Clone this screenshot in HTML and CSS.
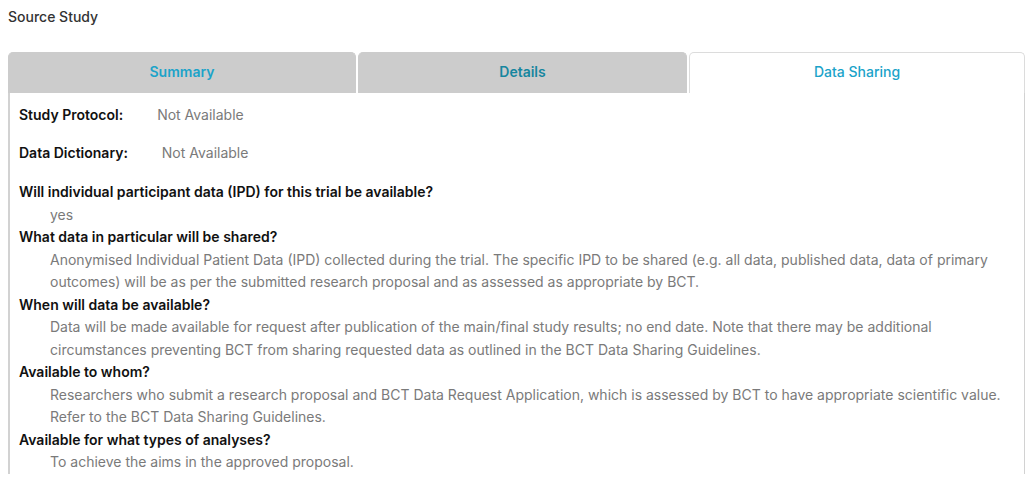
FILE: index.html
```html
<!DOCTYPE html>
<html lang="en">
<head>
    <meta charset="UTF-8">
    <meta name="viewport" content="width=device-width, initial-scale=1.0">
    <title>Source Study - Data Sharing</title>
    <link rel="stylesheet" href="styles.css">
</head>
<body>
    <h4 class="section-title">Source Study</h4>

    <div class="tabs">
        <ul class="tab-list">
            <li class="tab">Summary</li>
            <li class="tab tab-hover">Details</li>
            <li class="tab active">Data Sharing</li>
        </ul>

        <div class="tab-panel">
            <div class="field">
                <span class="field-label">Study Protocol:</span>
                <span class="field-value">Not Available</span>
            </div>
            <div class="field">
                <span class="field-label">Data Dictionary:</span>
                <span class="field-value">Not Available</span>
            </div>

            <dl class="qa">
                <dt>Will individual participant data (IPD) for this trial be available?</dt>
                <dd>yes</dd>
                <dt>What data in particular will be shared?</dt>
                <dd>Anonymised Individual Patient Data (IPD) collected during the trial. The specific IPD to be shared (e.g. all data, published data, data of primary outcomes) will be as per the submitted research proposal and as assessed as appropriate by BCT.</dd>
                <dt>When will data be available?</dt>
                <dd>Data will be made available for request after publication of the main/final study results; no end date. Note that there may be additional circumstances preventing BCT from sharing requested data as outlined in the BCT Data Sharing Guidelines.</dd>
                <dt>Available to whom?</dt>
                <dd>Researchers who submit a research proposal and BCT Data Request Application, which is assessed by BCT to have appropriate scientific value. Refer to the BCT Data Sharing Guidelines.</dd>
                <dt>Available for what types of analyses?</dt>
                <dd>To achieve the aims in the approved proposal.</dd>
            </dl>
        </div>
    </div>
</body>
</html>
```

FILE: styles.css
```css
:root {
    --tab-bg: #cccccc;
    --tab-text: #1ba3c9;
    --tab-text-hover: #16869f;
    --border: #d2d2d2;
    --label: #111111;
    --muted: #7a7a7a;
}

body {
    font-family: Inter, 'Noto Sans', sans-serif;
    font-size: 14px;
    color: #333;
    margin: 0;
    padding: 8px;
    background: white;
}

.section-title {
    font-size: 14px;
    font-weight: 500;
    color: #333;
    margin: 0 0 26px;
    line-height: 18px;
}

.tab-list {
    list-style: none;
    margin: 0;
    padding: 0;
    display: grid;
    grid-template-columns: 348px 329px 336px;
    gap: 2px;
}

.tab {
    height: 41px;
    padding-bottom: 3px;
    display: flex;
    align-items: center;
    justify-content: center;
    background: var(--tab-bg);
    border: 1px solid var(--tab-bg);
    border-bottom: none;
    border-radius: 5px 5px 0 0;
    color: var(--tab-text);
    font-weight: 600;
    box-sizing: border-box;
}

.tab-hover {
    color: var(--tab-text-hover);
}

.tab.active {
    background: white;
    border-color: #dcdcdc;
    font-weight: 500;
}

.tab-panel {
    width: 1017px;
    box-sizing: border-box;
    border-left: 2px solid var(--border);
    border-right: 1px solid var(--border);
    padding: 12px 10px 0 9px;
}

.field {
    line-height: 19px;
    margin-bottom: 19px;
}

.field-label {
    display: inline-block;
    font-weight: 600;
    color: var(--label);
    margin-right: 30px;
}

.field-value {
    color: var(--muted);
}

.qa {
    margin: 0;
    line-height: 22.5px;
}

.qa dt {
    font-weight: 600;
    color: var(--label);
}

.qa dd {
    margin: 0 0 0 31px;
    color: var(--muted);
}
```
